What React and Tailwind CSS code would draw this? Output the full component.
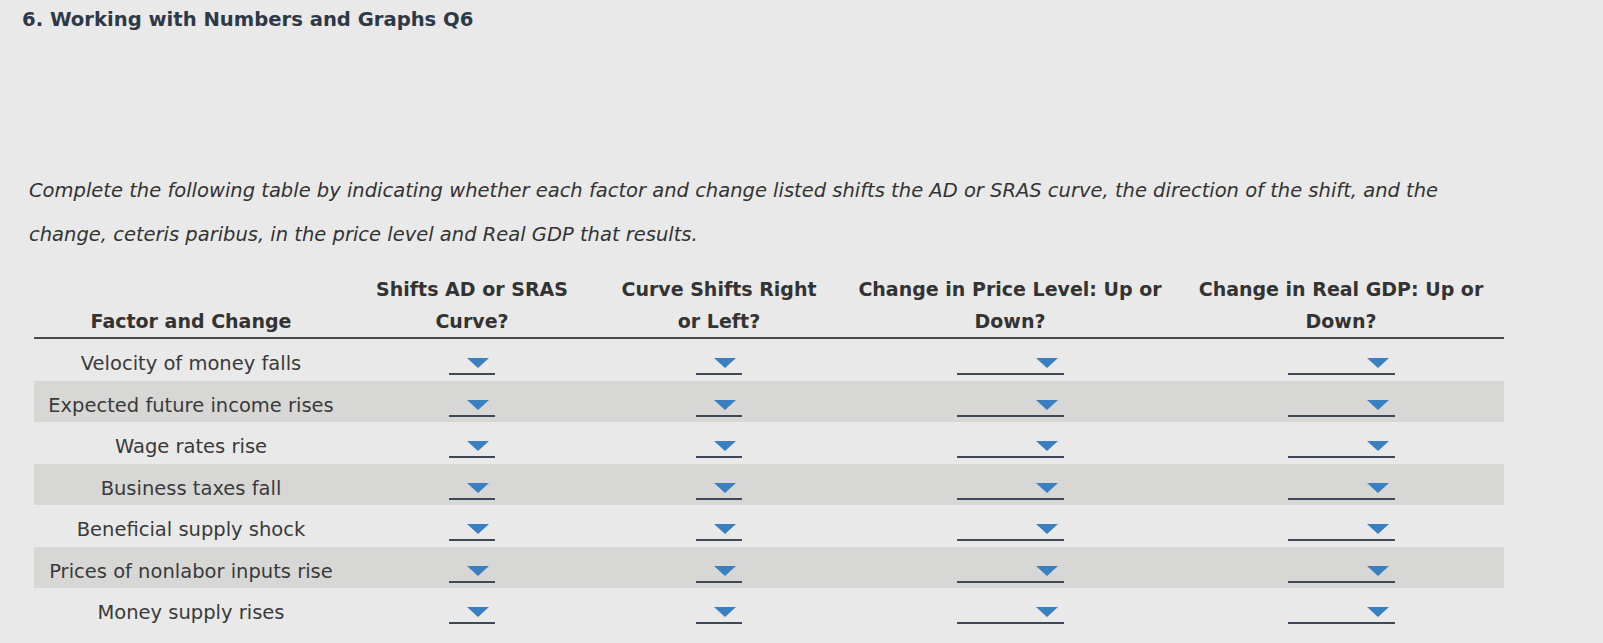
import React from 'react';

const rows = [
  'Velocity of money falls',
  'Expected future income rises',
  'Wage rates rise',
  'Business taxes fall',
  'Beneficial supply shock',
  'Prices of nonlabor inputs rise',
  'Money supply rises',
];

function Dropdown({ wide }) {
  return (
    <div
      className={`flex h-[17px] items-start justify-end border-b-2 border-[#3f4a58] pr-[6px] ${
        wide ? 'w-[107px]' : 'w-[46px]'
      }`}
    >
      <svg width="22" height="10" viewBox="0 0 22 10">
        <polygon points="0,0 22,0 11,10" fill="#3a7fc0" />
      </svg>
    </div>
  );
}

export default function App() {
  return (
    <div className="min-h-screen w-full bg-[#e8e9e8] font-['DejaVu_Sans',sans-serif] text-[#3a3a3a]">
      <h1 className="pl-[22px] pt-[8px] text-[19.6px] font-bold leading-[24px] text-[#2e3947]">
        6. Working with Numbers and Graphs Q6
      </h1>

      <p className="mt-[137px] pl-[29px] text-[19.5px] italic leading-[44px] text-[#333]">
        Complete the following table by indicating whether each factor and change listed shifts the AD or SRAS curve, the direction of the shift, and the
        <br />
        change, ceteris paribus, in the price level and Real GDP that results.
      </p>

      <div className="ml-[34px] mt-[16px] w-[1470px]">
        {/* Header */}
        <div className="grid grid-cols-[314px_248px_246px_336px_326px] border-b-2 border-[#4a4a4a] text-[19px] font-bold leading-[32px] text-[#333]">
          <div className="flex items-end justify-center">Factor and Change</div>
          <div className="text-center">Shifts AD or SRAS<br />Curve?</div>
          <div className="text-center">Curve Shifts Right<br />or Left?</div>
          <div className="text-center">Change in Price Level: Up or<br />Down?</div>
          <div className="text-center">Change in Real GDP: Up or<br />Down?</div>
        </div>

        {/* Rows */}
        {rows.map((label, i) => (
          <div
            key={label}
            className={`grid h-[41.5px] grid-cols-[314px_248px_246px_336px_326px] text-[19.5px] ${
              i % 2 === 1 ? 'bg-[#d7d8d6]' : ''
            }`}
          >
            <div className="flex items-center justify-center pt-[8px]">{label}</div>
            <div className="flex justify-center pt-[19px]">
              <Dropdown />
            </div>
            <div className="flex justify-center pt-[19px]">
              <Dropdown />
            </div>
            <div className="flex justify-center pt-[19px]">
              <Dropdown wide />
            </div>
            <div className="flex justify-center pt-[19px]">
              <Dropdown wide />
            </div>
          </div>
        ))}
      </div>
    </div>
  );
}
